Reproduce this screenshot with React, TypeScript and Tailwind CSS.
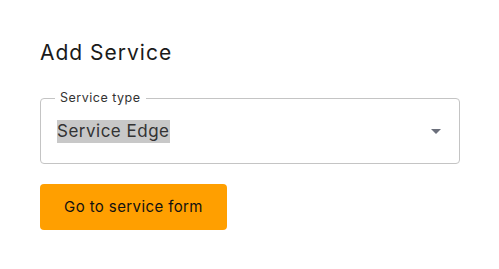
export default function App() {
  return (
    <div className="min-h-screen bg-white px-10 pt-[38px] font-['Inter','Lato',sans-serif] text-[#1a1a1a]">
      <h1 className="text-[21px] leading-[30px] font-normal tracking-[1px]">Add Service</h1>

      <fieldset className="relative mt-[25px] h-[71px] w-[420px] rounded border border-[#c4c4c4] px-[16px]">
        <legend className="-ml-[2px] px-[5px] text-[12.5px] leading-[10px] tracking-[0.5px] text-[#333]">Service type</legend>
        <div className="flex h-full items-center justify-between pb-[3px] pr-[2px]">
          <span className="bg-[#c8c8c8] text-[17px] leading-[23px] tracking-[0.5px] text-[#333]">Service Edge</span>
          <svg width="10" height="5" viewBox="0 0 10 5" className="mb-[1px]">
            <path d="M0 0h10L5 5z" fill="#6b6f7b" />
          </svg>
        </div>
      </fieldset>

      <button className="mt-[20px] h-[46px] w-[187px] rounded bg-[#ff9f00] text-[15px] tracking-[0.4px] text-[#111]">
        Go to service form
      </button>
    </div>
  )
}
